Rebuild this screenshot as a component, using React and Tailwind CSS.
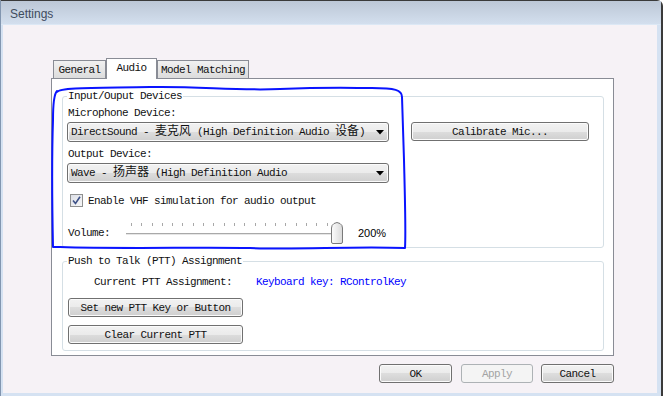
import React from "react";

const mono =
  "font-['Liberation_Mono','Noto_Sans_CJK_SC',monospace] text-[11px] tracking-[-0.6px] leading-[12px] text-[#111]";
const btnBg =
  "bg-[linear-gradient(to_bottom,#f2f2f2_0%,#ebebeb_50%,#dddddd_50%,#cfcfcf_100%)] shadow-[inset_0_0_0_1px_#fbfbfb]";

function Cjk({ children }) {
  return <span className="text-[12px] tracking-normal">{children}</span>;
}

function Button({ children, className = "", disabled }) {
  return (
    <div
      className={`flex items-center justify-center rounded-[3px] border ${
        disabled
          ? "border-[#adb2b5] bg-[#f4f4f4] text-[#a0a0a0]"
          : `border-[#707070] ${btnBg}`
      } ${className}`}
    >
      <span className={`${mono} ${disabled ? "!text-[#a3a3a3]" : ""}`}>{children}</span>
    </div>
  );
}

function Combo({ children }) {
  return (
    <div
      className={`flex h-[20px] w-[322px] items-center justify-between rounded-[3px] border border-[#707070] pl-[3px] pr-[3px] ${btnBg}`}
    >
      <span className={`${mono} whitespace-nowrap`}>{children}</span>
      <svg width="8" height="5" viewBox="0 0 8 5" className="mr-[1px]">
        <polygon points="0,0 8,0 4,4.5" fill="#000" />
      </svg>
    </div>
  );
}

function Group({ title, className = "", children }) {
  return (
    <div className={`relative rounded-[3px] border border-[#d5dfe5] ${className}`}>
      <span className={`${mono} absolute -top-[7px] left-[4px] bg-white px-[1px]`}>
        {title}
      </span>
      {children}
    </div>
  );
}

function Slider() {
  const ticks = Array.from({ length: 21 });
  return (
    <div className="relative h-[22px] w-[217px]">
      <div className="absolute left-[5px] top-[1px] flex w-[207px] justify-between">
        {ticks.map((_, i) => (
          <span key={i} className="h-[3px] w-px bg-[#a8a8a8]" />
        ))}
      </div>
      <div className="absolute left-0 top-[11px] h-[1px] w-[212px] bg-[#a9a9a9]" />
      <div className="absolute left-0 top-[12px] h-[1px] w-[212px] bg-[#e6e6e6]" />
      <svg
        className="absolute left-[205px] top-0"
        width="12"
        height="22"
        viewBox="0 0 12 22"
      >
        <defs>
          <linearGradient id="th" x1="0" y1="0" x2="1" y2="0">
            <stop offset="0" stopColor="#fdfdfd" />
            <stop offset="1" stopColor="#d9d9d9" />
          </linearGradient>
        </defs>
        <path
          d="M0.5 6 Q0.5 3 3 1.5 L6 0.5 L9 1.5 Q11.5 3 11.5 6 L11.5 20 Q11.5 21.5 10 21.5 L2 21.5 Q0.5 21.5 0.5 20 Z"
          fill="url(#th)"
          stroke="#7a7a7a"
        />
      </svg>
    </div>
  );
}

export default function App() {
  return (
    <div className="relative h-[396px] w-[663px] overflow-hidden">
      <div className="flex h-[396px] w-[663px] flex-col rounded-tr-[6px] border-l border-r-2 border-t border-[#3a3a3a] border-l-[#8296b0]">
        {/* Title bar */}
        <div className="h-[24px] bg-[linear-gradient(to_bottom,#bcc7d6,#d3dfee)] pl-[9px] pt-[6px] font-['Liberation_Sans',sans-serif] text-[12px] leading-[15px] text-[#3f4c5e] border-b border-[#dce8f5]">
          Settings
        </div>

        {/* Client */}
        <div className="flex flex-1 flex-col border-b-[3px] border-l-2 border-r-[4px] border-[#d5e2f2] bg-[#f6f2f6]">
          {/* Tabs */}
          <div className="ml-[50px] mt-[33px] flex h-[20px] items-end">
            <div className="flex h-[18px] w-[53px] items-center justify-center border border-b-0 border-[#898c95] bg-[linear-gradient(to_bottom,#f1f1f1,#dcdcdc)]">
              <span className={mono}>General</span>
            </div>
            <div className="relative z-10 -mb-px flex h-[21px] w-[51px] items-start justify-center border border-b-0 border-[#898c95] bg-white pt-[3px]">
              <span className={mono}>Audio</span>
            </div>
            <div className="flex h-[18px] w-[92px] items-center justify-center border border-b-0 border-[#898c95] bg-[linear-gradient(to_bottom,#f1f1f1,#dcdcdc)]">
              <span className={mono}>Model Matching</span>
            </div>
          </div>

          {/* Tab panel */}
          <div className="ml-[48px] h-[278px] w-[563px] border border-[#898c95] bg-white pl-[10px] pt-[17px]">
            <Group title="Input/Ouput Devices" className="h-[152px] w-[542px]">
              <div className="flex pl-[4px] pt-[10px]">
                <div className="flex w-[322px] flex-col">
                  <span className={`${mono} ml-[1px]`}>Microphone Device:</span>
                  <div className="mt-[3px]">
                    <Combo>
                      DirectSound - <Cjk>麦克风</Cjk> (High Definition Audio <Cjk>设备</Cjk>)
                    </Combo>
                  </div>
                  <span className={`${mono} ml-[1px] mt-[6px]`}>Output Device:</span>
                  <div className="mt-[3px]">
                    <Combo>
                      Wave - <Cjk>扬声器</Cjk> (High Definition Audio
                    </Combo>
                  </div>
                  <div className="ml-[3px] mt-[11px] flex h-[13px] items-center">
                    <svg width="13" height="13" viewBox="0 0 13 13">
                      <defs>
                        <linearGradient id="cb" x1="0" y1="0" x2="1" y2="1">
                          <stop offset="0" stopColor="#dbdee6" />
                          <stop offset="1" stopColor="#f7f7f7" />
                        </linearGradient>
                      </defs>
                      <rect x="0.5" y="0.5" width="12" height="12" fill="url(#cb)" stroke="#8e8f8f" />
                      <path d="M3 6.5 L5.5 9.5 L10 2.8" fill="none" stroke="#3d5187" strokeWidth="1.6" />
                    </svg>
                    <span className={`${mono} ml-[5px]`}>Enable VHF simulation for audio output</span>
                  </div>
                </div>
                <Button className="ml-[22px] mt-[15px] h-[19px] w-[178px]">Calibrate Mic...</Button>
              </div>
              <div className="ml-[5px] mt-[15px] flex h-[22px] items-center">
                <span className={`${mono} w-[58px]`}>Volume:</span>
                <Slider />
                <span className="ml-[15px] font-['Liberation_Sans',sans-serif] text-[11px] leading-[12px] text-black">
                  200%
                </span>
              </div>
            </Group>

            <Group title="Push to Talk (PTT) Assignment" className="mt-[13px] h-[90px] w-[542px]">
              <div className="flex flex-col pl-[5px] pt-[14px]">
                <div className="ml-[26px] flex">
                  <span className={mono}>Current PTT Assignment:</span>
                  <span className={`${mono} ml-[24px] !text-[#0000ff]`}>Keyboard key: RControlKey</span>
                </div>
                <Button className="mt-[10px] h-[19px] w-[175px]">Set new PTT Key or Button</Button>
                <Button className="mt-[8px] h-[19px] w-[175px]">Clear Current PTT</Button>
              </div>
            </Group>
          </div>

          {/* Dialog buttons */}
          <div className="ml-[376px] mt-[8px] flex">
            <Button className="h-[19px] w-[73px]">OK</Button>
            <Button className="ml-[9px] h-[19px] w-[72px]" disabled>
              Apply
            </Button>
            <Button className="ml-[8px] h-[19px] w-[73px]">Cancel</Button>
          </div>
        </div>
      </div>

      {/* hand-drawn annotation */}
      <svg className="pointer-events-none absolute left-0 top-0" width="663" height="396" viewBox="0 0 663 396">
        <path
          d="M57 92 C60 87 100 88 150 87 C200 86 235 91 280 89 C330 87 352 88 372 88 C395 88 402 90 402 97 L404 160 C405 200 406 232 405 248 C350 246 300 250 250 248 C200 247 120 249 60 247 L53 247 C52 200 52 150 53 120 C53 102 54 94 57 91 Z"
          fill="none"
          stroke="#0a14ff"
          strokeWidth="2"
          strokeLinejoin="round"
        />
      </svg>
    </div>
  );
}
